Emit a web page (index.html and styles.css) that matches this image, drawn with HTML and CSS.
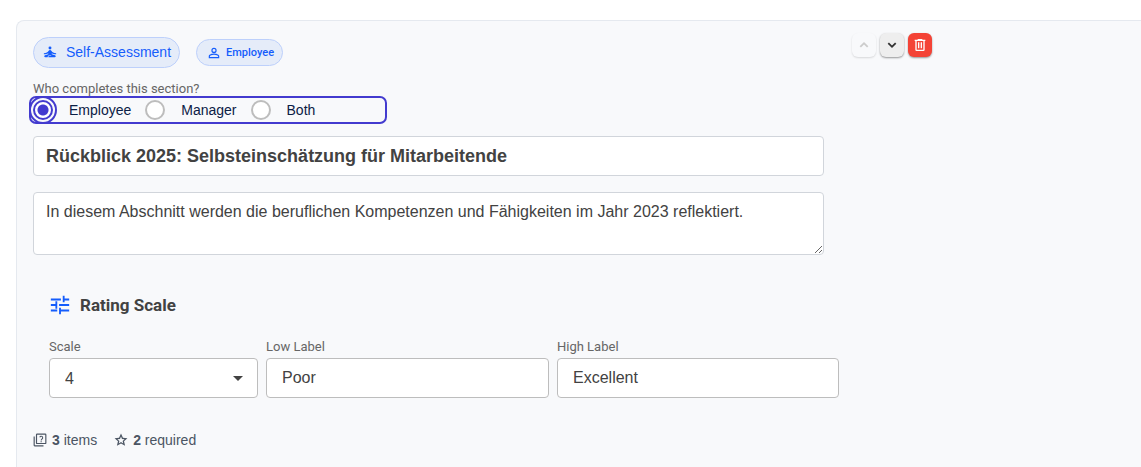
FILE: index.html
```html
<!DOCTYPE html>
<html lang="en">
<head>
<meta charset="utf-8">
<meta name="viewport" content="width=device-width, initial-scale=1">
<title>Section editor</title>
<link rel="stylesheet" href="styles.css">
</head>
<body>
<main class="section-card">
  <div class="section-top">
    <div class="section-main">
      <div class="chips">
        <span class="chip chip-large">
          <svg class="icon-small" viewBox="0 0 24 24" aria-hidden="true"><circle cx="12" cy="5" r="2.500"/><path d="M12 8.500c-1 0-1.800.5-2.300 1.400C8.300 12.300 5.500 13.800 1.500 14v2c3.200 0 5.700-.7 7.500-2v2l-5.500 1.500C1.500 18 1.800 21 4 21h4c0-2 1-3 2.500-3H14v1h-3.500c-.8 0-1.300.8-1.300 2H20c2.200 0 2.500-3 .5-3.500L15 16v-2c1.800 1.300 4.300 2 7.500 2v-2c-4-.2-6.800-1.700-8.200-4.100-.5-.9-1.300-1.400-2.300-1.400z"/></svg>
          Self-Assessment
        </span>
        <span class="chip chip-small">
          <svg class="icon-small" viewBox="0 0 24 24" aria-hidden="true"><path d="M12 5a2.500 2.500 0 1 1 0 5 2.500 2.500 0 0 1 0-5m0 10c3.500 0 7 1.500 7 2.500V19H5v-1.500c0-1 3.500-2.500 7-2.500M12 3a4.500 4.500 0 1 0 0 9 4.500 4.500 0 0 0 0-9zm0 10c-3 0-9 1.500-9 4.500V21h18v-3.500c0-3-6-4.500-9-4.500z"/></svg>
          Employee
        </span>
      </div>
      <fieldset class="completer">
        <legend class="caption">Who completes this section?</legend>
        <div class="radio-group">
          <label class="radio"><input type="radio" name="completer" value="employee" checked><span>Employee</span></label>
          <label class="radio"><input type="radio" name="completer" value="manager"><span>Manager</span></label>
          <label class="radio"><input type="radio" name="completer" value="both"><span>Both</span></label>
        </div>
      </fieldset>
      <input class="title-field" type="text" aria-label="Section title" value="Rückblick 2025: Selbsteinschätzung für Mitarbeitende">
      <textarea class="description-field" aria-label="Section description">In diesem Abschnitt werden die beruflichen Kompetenzen und Fähigkeiten im Jahr 2023 reflektiert.</textarea>
    </div>
    <div class="actions">
      <button class="action" type="button" aria-label="Move up" disabled><svg viewBox="0 0 24 24" aria-hidden="true"><path d="M7.400 15.900 12 11.300l4.600 4.600L18.500 14 12 7.500 5.500 14z"/></svg></button>
      <button class="action" type="button" aria-label="Move down"><svg viewBox="0 0 24 24" aria-hidden="true"><path d="M7.400 8.100 12 12.700l4.600-4.600L18.500 10 12 16.500 5.500 10z"/></svg></button>
      <button class="action action-delete" type="button" aria-label="Delete section"><svg viewBox="0 0 24 24" aria-hidden="true"><path d="M15 3l1 1h4v2h-1v13a2 2 0 0 1-2 2H7a2 2 0 0 1-2-2V6H4V4h4l1-1zM7 6v13h10V6zm2 2h2v9H9zm4 0h2v9h-2z"/></svg></button>
    </div>
  </div>
  <section class="rating">
    <h2 class="rating-title">
      <svg viewBox="0 0 24 24" aria-hidden="true"><path d="M2 17v2h7v-2zM2 5v2h11V5zm11 17v-3h9v-2h-9v-2h-2v7zM7 8v3H2v2h5v3h2V8zm15 5v-2H11v2zm-7-4h2V7h5V5h-5V2h-2z"/></svg>
      Rating Scale
    </h2>
    <div class="rating-fields">
      <div class="field">
        <label class="caption" for="scale">Scale</label>
        <div class="select-wrap">
          <select class="field-box" id="scale"><option>3</option><option selected>4</option><option>5</option></select>
          <svg class="select-arrow" viewBox="0 0 10 5" aria-hidden="true"><path d="M0 0h10L5 5z"/></svg>
        </div>
      </div>
      <div class="field">
        <label class="caption" for="low">Low Label</label>
        <input class="field-box" id="low" type="text" value="Poor">
      </div>
      <div class="field">
        <label class="caption" for="high">High Label</label>
        <input class="field-box" id="high" type="text" value="Excellent">
      </div>
    </div>
  </section>
  <footer class="summary">
    <span class="stat"><svg viewBox="0 0 24 24" aria-hidden="true"><path d="M3 6H1v15a2 2 0 0 0 2 2h15v-2H3zM21 1H7a2 2 0 0 0-2 2v14a2 2 0 0 0 2 2h14a2 2 0 0 0 2-2V3a2 2 0 0 0-2-2zm0 16H7V3h14zM13 14h2v2h-2zm2-1.200c0-1.600 2.500-2.100 2.500-4.600A3.400 3.400 0 0 0 14 4.800a3.400 3.400 0 0 0-3.200 2.200l1.500.7c.3-.7.900-1.200 1.700-1.200 1 0 1.700.7 1.700 1.700 0 1.500-2.500 2.200-2.500 4.600z"/></svg><span><b>3</b> items</span></span>
    <span class="stat"><svg viewBox="0 0 24 24" aria-hidden="true"><path d="M23 9l-7.700-.7L12 1 8.700 8.300 1 9l5.800 5.100L5 22l7-4.100 7 4.100-1.800-7.900zM12 15.500l-3.800 2.300 1-4.300-3.300-2.900 4.400-.4L12 6.100l1.700 4.100 4.400.4-3.300 2.900 1 4.300z"/></svg><span><b>2</b> required</span></span>
  </footer>
</main>
</body>
</html>
```
FILE: styles.css
```css
* { box-sizing: border-box; }

body {
  margin: 0;
  padding: 20px 0 0 16px;
  background: #fff;
  color: #424242;
  font-family: "Liberation Sans", Arial, sans-serif;
  font-size: 14px;
}

svg { display: block; flex: none; fill: currentColor; }

.section-card {
  min-height: calc(100vh - 20px);
  padding: 16px 0 16px 16px;
  border: 1px solid #e5e9ef;
  border-width: 1px 0 0 1px;
  border-radius: 8px 0 0 0;
  background: #f8f9fb;
}

.section-top {
  display: grid;
  grid-template-columns: minmax(0, 1fr) 289px;
  gap: 28px;
}

.section-main { display: flex; flex-direction: column; }

.chips { display: flex; align-items: center; gap: 16px; }

.chip {
  display: inline-flex;
  align-items: center;
  border: 1px solid #bdd0fb;
  border-radius: 16px;
  background: #e5ecf9;
  color: #155dfc;
}

.chip-large { height: 31px; gap: 9px; padding: 0 8px 1px 9px; font-size: 14px; }
.chip-small { height: 27px; gap: 5px; padding: 0 8px 0 10px; font: 500 11px Roboto, sans-serif; }
.icon-small { width: 14px; height: 14px; }

.completer { min-width: 0; margin: 14px 0 0; padding: 0; border: 0; }

.caption {
  display: block;
  padding: 0;
  color: #666;
  font: 400 13px/14px Roboto, sans-serif;
}

.radio-group {
  display: flex;
  align-items: center;
  gap: 14px;
  width: 358px;
  height: 28px;
  margin-left: -4px;
  padding-left: 4px;
  border: 2px solid #433bcf;
  border-radius: 7px;
}

.radio { display: flex; align-items: center; gap: 16px; color: #0b2045; }

.radio input {
  appearance: none;
  width: 20px;
  height: 20px;
  margin: 0;
  border: 2px solid #bdbdbd;
  border-radius: 50%;
  background: #fff;
}

.radio input:checked {
  margin-left: -2px;
  border-color: #433bcf;
  background: radial-gradient(circle, #433bcf 5px, #fff 6px);
  outline: 2px solid #433bcf;
  outline-offset: 2px;
}

.title-field, .description-field {
  width: 100%;
  border: 1px solid #d1d5db;
  border-radius: 4px;
  background: #fff;
  color: #424242;
  font-family: inherit;
}

.title-field { height: 40px; margin-top: 12px; padding: 0 12px; font-size: 18px; font-weight: 700; }

.description-field {
  height: 63px;
  margin-top: 16px;
  padding: 8px 12px;
  font-size: 16px;
  line-height: 22px;
  resize: vertical;
}

.actions { display: flex; align-items: flex-start; gap: 4px; margin-top: -4px; }

.action {
  display: grid;
  place-items: center;
  width: 24px;
  height: 24px;
  padding: 0;
  border: 0;
  border-radius: 6px;
  background: #eee;
  box-shadow: 0 1px 2px #0006;
  color: #333;
}

.action svg { width: 16px; height: 16px; }
.action:disabled { background: #f8f9fb; box-shadow: 0 1px 2px #0002; color: #ccc; }
.action-delete { background: #f44336; color: #fff; }

.rating { margin: 39px 302px 0 16px; }

.rating-title {
  display: flex;
  align-items: center;
  gap: 9px;
  height: 22px;
  margin: 0;
  font: 700 17px Roboto, sans-serif;
}

.rating-title svg { width: 22px; height: 22px; color: #155dfc; }

.rating-fields {
  display: grid;
  grid-template-columns: 209fr 283fr 282fr;
  gap: 8px;
  margin-top: 24px;
}

.field { min-width: 0; }

.field-box {
  appearance: none;
  display: block;
  width: 100%;
  height: 40px;
  margin-top: 4px;
  padding: 0 15px;
  border: 1px solid #bdbdbd;
  border-radius: 4px;
  background: #fff;
  color: #424242;
  font: 16px "Liberation Sans", Arial, sans-serif;
}

.select-wrap { position: relative; }
.select-arrow { position: absolute; top: 18px; right: 15px; width: 10px; height: 5px; pointer-events: none; }

.summary { display: flex; gap: 17px; margin-top: 34px; color: #4b5563; line-height: 16px; }
.stat { display: flex; align-items: center; gap: 5px; }
.stat svg { width: 14px; height: 14px; }
```
